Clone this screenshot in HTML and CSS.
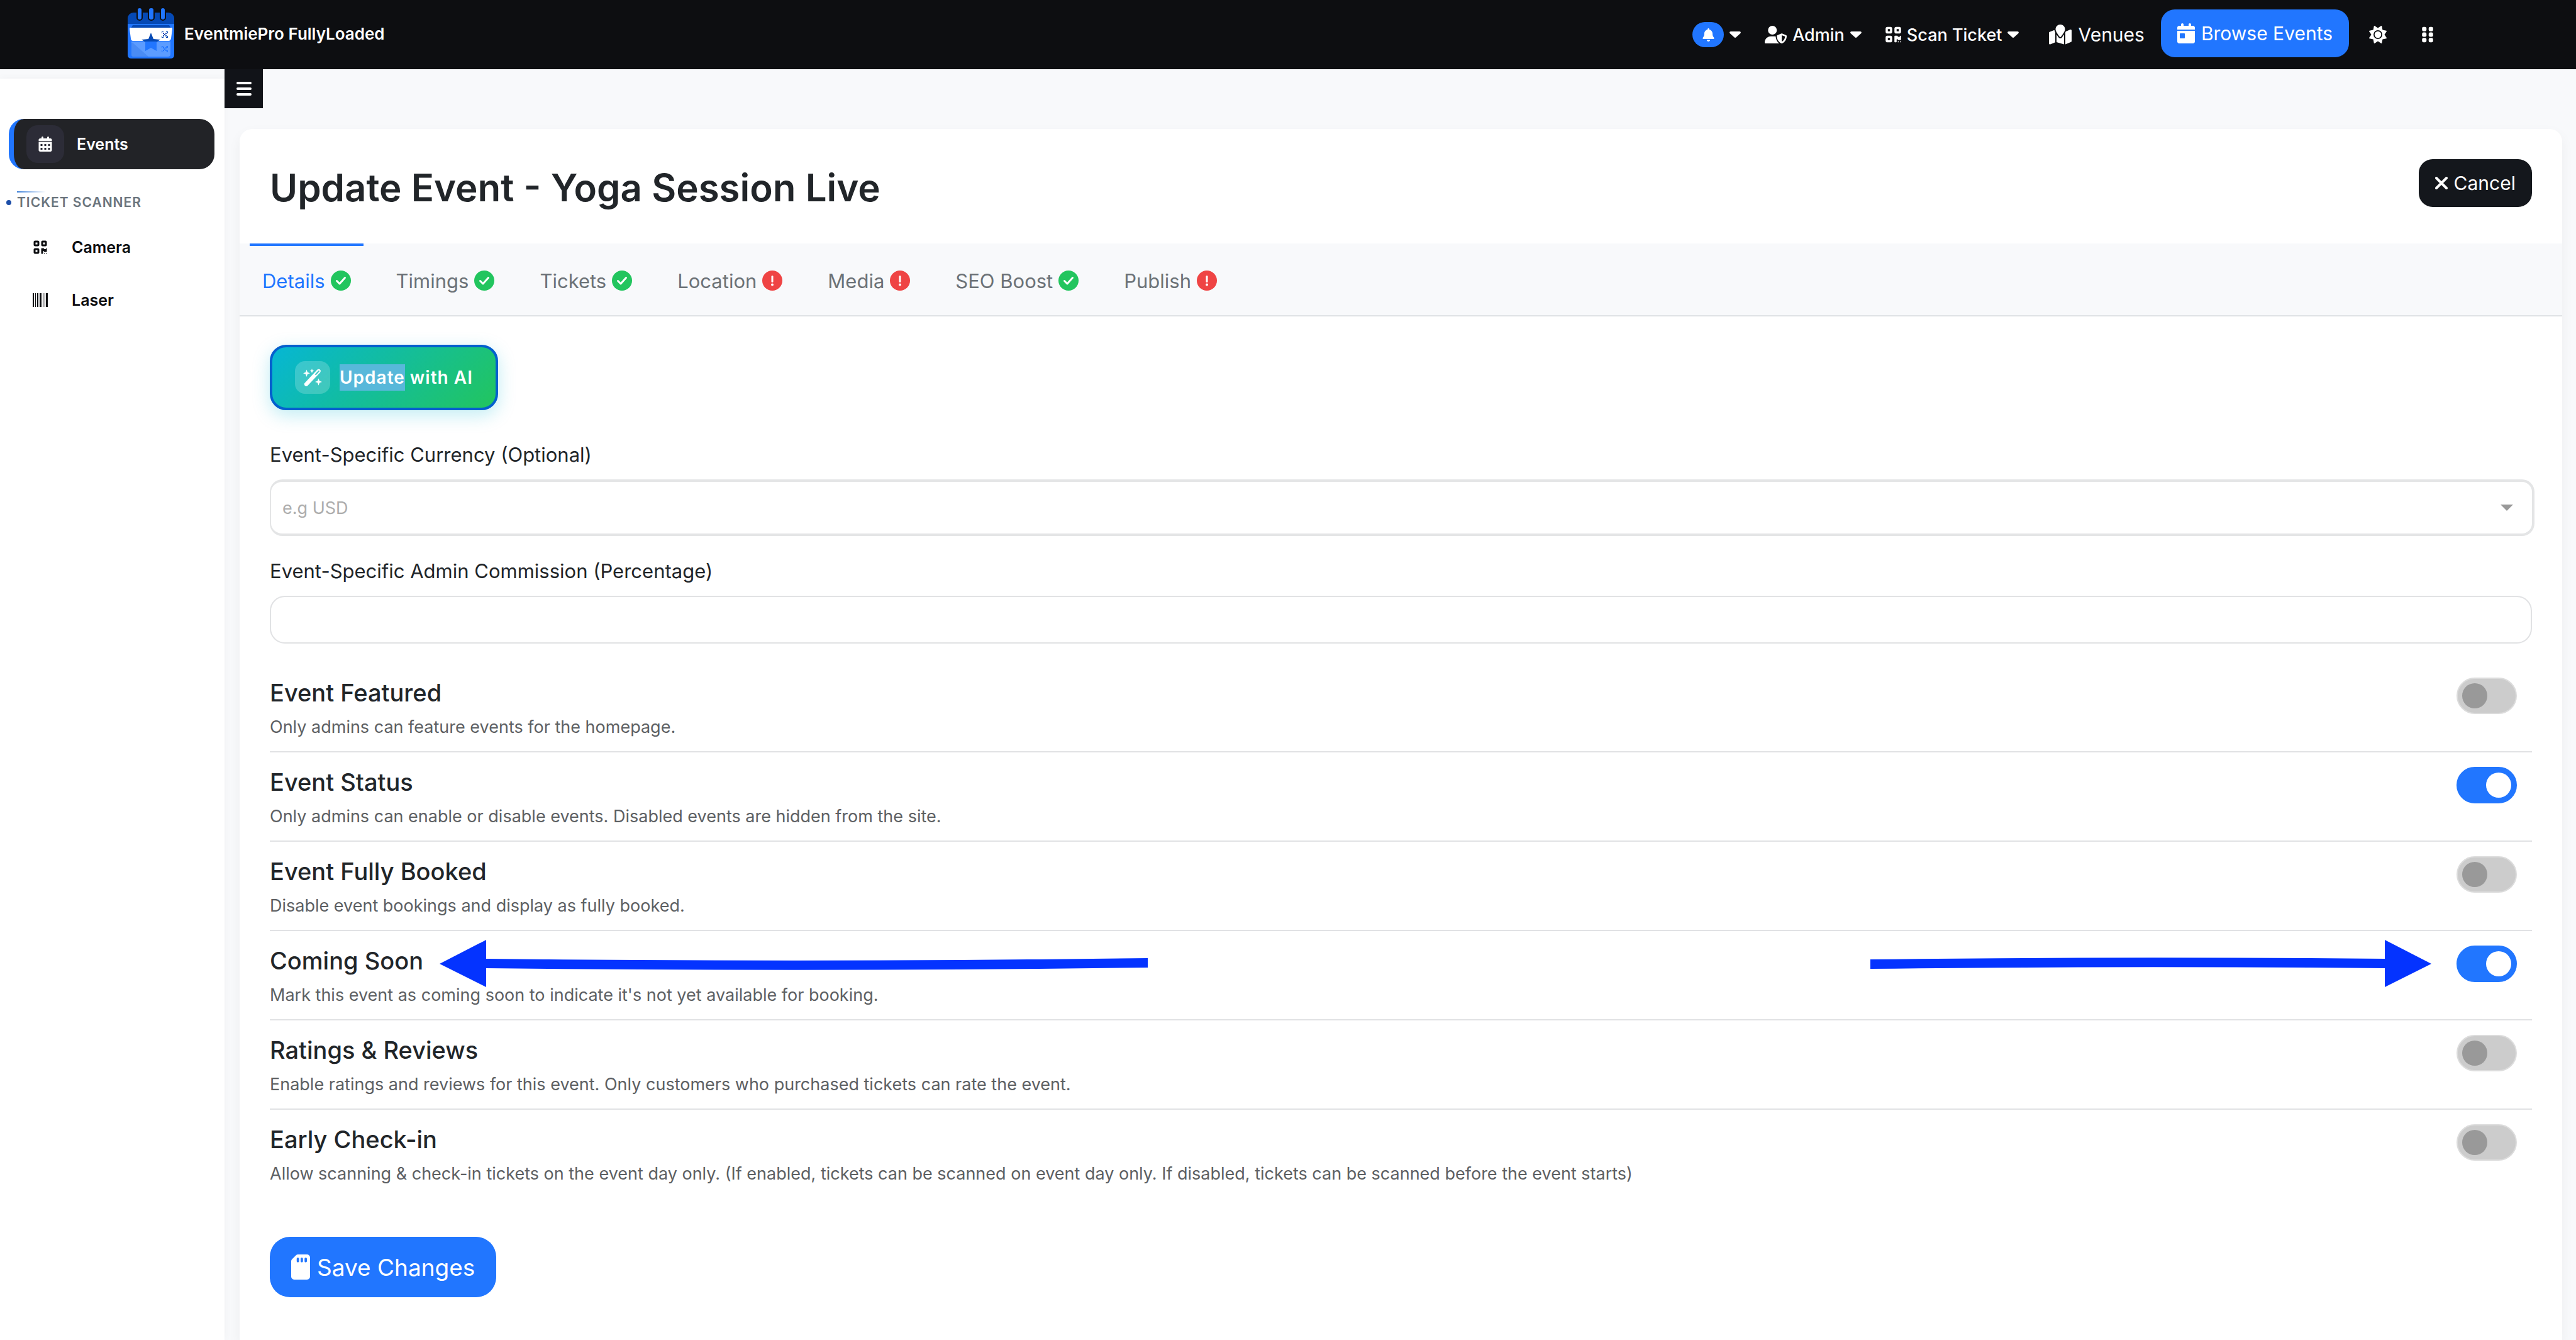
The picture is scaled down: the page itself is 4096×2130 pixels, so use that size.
FILE: index.html
```html
<!DOCTYPE html>
<html lang="en">
<head>
<meta charset="utf-8">
<title>Update Event - EventmiePro FullyLoaded</title>
<link rel="stylesheet" href="styles.css">
</head>
<body>
<svg class="sprite" aria-hidden="true">
  <symbol id="caret" viewBox="0 0 18 10"><path d="M2 0h14c1.700 0 2.500 1.800 1.300 3l-6.800 6.300c-.9.900-2.100.900-3 0L.7 3C-.5 1.800.3 0 2 0z"/></symbol>
  <symbol id="bell" viewBox="0 0 448 512"><path d="M224 0c-17.700 0-32 14.300-32 32V51.200C119 66 64 130.600 64 208v18.800c0 47-17.300 92.400-48.500 127.600l-7.400 8.300c-8.400 9.400-10.400 22.900-5.300 34.400S19.400 416 32 416H416c12.600 0 24-7.400 29.200-18.900s3.100-25-5.300-34.400l-7.400-8.300C401.300 319.200 384 273.900 384 226.800V208c0-77.400-55-142-128-156.800V32c0-17.700-14.300-32-32-32zm45.300 493.300c12-12 18.700-28.300 18.700-45.300H160c0 17 6.700 33.300 18.700 45.300s28.300 18.700 45.300 18.700s33.300-6.700 45.300-18.700z"/></symbol>
  <symbol id="user-shield" viewBox="0 0 640 512"><path d="M224 256A128 128 0 1 0 224 0a128 128 0 1 0 0 256zm-45.700 48C79.800 304 0 383.800 0 482.300C0 498.700 13.300 512 29.700 512H418.300c1.800 0 3.500-.2 5.300-.5c-76.300-55.100-99.800-141-103.100-200.200c-16.100-4.800-33.100-7.300-50.700-7.300H178.300zm308.800-78.300l-120 48C358 277.400 352 286.200 352 296c0 63.300 25.900 168.800 134.800 214.200c5.900 2.500 12.600 2.500 18.500 0C614.100 464.800 640 359.300 640 296c0-9.800-6-18.600-15.100-22.300l-120-48c-5.700-2.300-12.100-2.300-17.800 0zM591.400 312c-3.900 50.700-27.200 116.700-95.400 149.700V273.800L591.400 312z"/></symbol>
  <symbol id="qrcode" viewBox="0 0 448 512"><path fill-rule="evenodd" d="M0 80C0 53.500 21.500 32 48 32h96c26.500 0 48 21.500 48 48v96c0 26.500-21.500 48-48 48H48c-26.500 0-48-21.500-48-48V80zM64 96v64h64V96H64zM0 336c0-26.500 21.500-48 48-48h96c26.500 0 48 21.500 48 48v96c0 26.500-21.500 48-48 48H48c-26.500 0-48-21.500-48-48V336zm64 16v64h64V352H64zM304 32h96c26.500 0 48 21.500 48 48v96c0 26.500-21.500 48-48 48H304c-26.500 0-48-21.500-48-48V80c0-26.500 21.500-48 48-48zm80 64H320v64h64V96zM256 304c0-8.800 7.200-16 16-16h64c8.800 0 16 7.200 16 16s7.200 16 16 16h32c8.800 0 16-7.200 16-16s7.200-16 16-16s16 7.200 16 16v96c0 8.800-7.200 16-16 16H368c-8.800 0-16-7.200-16-16s-7.200-16-16-16s-16 7.200-16 16v64c0 8.800-7.200 16-16 16H272c-8.800 0-16-7.200-16-16V304zM368 480a16 16 0 1 1 0-32 16 16 0 1 1 0 32zm64 0a16 16 0 1 1 0-32 16 16 0 1 1 0 32z"/></symbol>
  <symbol id="map" viewBox="0 0 576 512"><path d="M408 120c0 54.600-73.100 151.900-105.200 192c-7.700 9.600-22 9.600-29.600 0C241.100 271.900 168 174.600 168 120C168 53.700 221.700 0 288 0s120 53.700 120 120zM416 503l144.900-58c9.100-3.600 15.100-12.500 15.100-22.300V152c0-17-17.100-28.600-32.900-22.300l-116 46.400c-.5 1.200-1 2.500-1.500 3.700c-2.900 6.800-6.100 13.700-9.600 20.600V503zM15.100 187.300C6 191 0 199.800 0 209.600V480.400c0 17 17.100 28.600 32.900 22.300L160 451.800V200.400c-3.500-6.900-6.700-13.800-9.600-20.600c-5.600-13.200-10.400-27.400-12.800-41.500l-122.500 49zM384 253c-20.500 31.300-42.300 59.600-56.200 77c-20.500 25.600-59.100 25.600-79.600 0c-13.900-17.400-35.700-45.700-56.200-77V449.400l192 54.900V253z"/></symbol>
  <symbol id="calendar-day" viewBox="0 0 448 512"><path fill-rule="evenodd" d="M128 0c17.700 0 32 14.300 32 32V64H288V32c0-17.700 14.300-32 32-32s32 14.300 32 32V64h48c26.500 0 48 21.500 48 48v48H0V112C0 85.500 21.500 64 48 64H96V32c0-17.700 14.300-32 32-32zM0 192H448V464c0 26.500-21.500 48-48 48H48c-26.500 0-48-21.500-48-48V192zm80 64c-8.800 0-16 7.200-16 16v96c0 8.800 7.200 16 16 16h96c8.800 0 16-7.200 16-16V272c0-8.800-7.200-16-16-16H80z"/></symbol>
  <symbol id="calendar-days" viewBox="0 0 448 512"><path fill-rule="evenodd" d="M128 0c17.700 0 32 14.300 32 32V64H288V32c0-17.700 14.300-32 32-32s32 14.300 32 32V64h48c26.500 0 48 21.500 48 48v48H0V112C0 85.500 21.500 64 48 64H96V32c0-17.700 14.300-32 32-32zM0 192H448V464c0 26.500-21.500 48-48 48H48c-26.500 0-48-21.500-48-48V192zM64 256v64h64v-64zM192 256v64h64v-64zM320 256v64h64v-64zM64 384v64h64v-64zM192 384v64h64v-64zM320 384v64h64v-64z"/></symbol>
  <symbol id="sun" viewBox="0 0 512 512"><path d="M361.500 1.200c5 2.100 8.600 6.600 9.600 11.900L391 121l107.900 19.800c5.300 1 9.800 4.600 11.900 9.600s1.500 10.700-1.600 15.200L446.900 256l62.300 90.300c3.100 4.500 3.700 10.200 1.600 15.200s-6.600 8.600-11.900 9.600L391 391 371.100 498.900c-1 5.300-4.600 9.800-9.600 11.900s-10.700 1.500-15.200-1.600L256 446.900l-90.300 62.300c-4.500 3.100-10.200 3.700-15.200 1.600s-8.600-6.600-9.600-11.900L121 391 13.100 371.100c-5.300-1-9.800-4.600-11.900-9.600s-1.500-10.700 1.600-15.200L65.100 256 2.800 165.700c-3.100-4.500-3.700-10.200-1.600-15.200s6.600-8.600 11.900-9.600L121 121 140.900 13.100c1-5.300 4.600-9.800 9.600-11.900s10.700-1.500 15.200 1.600L256 65.100 346.300 2.800c4.500-3.100 10.200-3.700 15.200-1.600zM160 256a96 96 0 1 1 192 0 96 96 0 1 1 -192 0zm224 0a128 128 0 1 0 -256 0 128 128 0 1 0 256 0z"/></symbol>
  <symbol id="grip" viewBox="0 0 320 512"><rect y="32" width="128" height="128" rx="42"/><rect x="192" y="32" width="128" height="128" rx="42"/><rect y="192" width="128" height="128" rx="42"/><rect x="192" y="192" width="128" height="128" rx="42"/><rect y="352" width="128" height="128" rx="42"/><rect x="192" y="352" width="128" height="128" rx="42"/></symbol>
  <symbol id="bars" viewBox="0 0 24 22"><rect width="24" height="4" rx="2"/><rect y="9" width="24" height="4" rx="2"/><rect y="18" width="24" height="4" rx="2"/></symbol>
  <symbol id="barcode" viewBox="0 0 24 22"><path d="M0 0h2v22H0zM4 0h1v22H4zM7 0h2v22H7zM11 0h3v22h-3zM16 0h1v22h-1zM19 0h1v22h-1zM21 0h3v22h-3z"/></symbol>
  <symbol id="xmark" viewBox="0 0 20 20"><path d="M2 2l16 16M18 2L2 18" fill="none" stroke="currentColor" stroke-width="4" stroke-linecap="round"/></symbol>
  <symbol id="ok" viewBox="0 0 32 32"><circle cx="16" cy="16" r="16" fill="#22c55e"/><path d="M9.500 16.500l4.500 4.500 8.500-9.500" fill="none" stroke="#fff" stroke-width="3" stroke-linecap="round" stroke-linejoin="round"/></symbol>
  <symbol id="alert" viewBox="0 0 32 32"><circle cx="16" cy="16" r="16" fill="#ef4444"/><path d="M16 9.500v8" stroke="#fff" stroke-width="3" stroke-linecap="round"/><circle cx="16" cy="22.500" r="2" fill="#fff"/></symbol>
  <symbol id="wand" viewBox="0 0 30 28"><path fill-rule="evenodd" d="M2.800 22.600 22.300 1.800c1.400-1.500 3.300-1.500 4.600-.2s1.300 3.200 0 4.600L7.200 26.900c-1.300 1.300-3.200 1.300-4.500 0s-1.300-3 .1-4.300zM24.200 3.300l-5.400 5.700 1.400 1.500 5.400-5.700c1-1.200-.4-2.600-1.400-1.500z"/><path d="M5.500 1.500 7 5.800l4 1.500-4 1.500-1.500 4.200L4 8.800 0 7.300l4-1.500zM14 0l1 2.500 2.500 1L15 4.500 14 7l-1-2.500-2.500-1 2.500-1zM24.500 15.500l1.500 4 4 1.500-4 1.500-1.500 4.200-1.500-4.200-4-1.500 4-1.500z"/></symbol>
  <symbol id="sd" viewBox="0 0 384 512"><path fill-rule="evenodd" d="M320 0H141.300C124.300 0 108 6.700 96 18.700L18.700 96C6.700 108 0 124.300 0 141.300V448c0 35.300 28.700 64 64 64H320c35.300 0 64-28.700 64-64V64c0-35.300-28.700-64-64-64zM160 88v48c0 13.300-10.700 24-24 24s-24-10.700-24-24V88c0-13.300 10.700-24 24-24s24 10.700 24 24zm80 0v48c0 13.300-10.700 24-24 24s-24-10.700-24-24V88c0-13.300 10.700-24 24-24s24 10.700 24 24zm80 0v48c0 13.300-10.700 24-24 24s-24-10.700-24-24V88c0-13.300 10.700-24 24-24s24 10.700 24 24z"/></symbol>
  <symbol id="mini-qr" viewBox="0 0 10 10"><path d="M0 0h3v1H1v2H0zM7 0h3v3H9V1H7zM0 7h1v2h2v1H0zM9 7h1v3H7V9h2zM2 2h2v2H2zM6 2h2v2H6zM4 4h2v2H4zM2 6h2v2H2zM6 6h2v2H6z"/></symbol>
</svg>

<header class="topbar">
  <a class="brand" href="#">
    <svg class="brand-logo" viewBox="0 0 74 80">
      <rect y="7" width="74" height="40" rx="9" fill="#0549b5"/>
      <path d="M0 25h74v49q0 6-6 6H6q-6 0-6-6z" fill="#2176ff"/>
      <path d="M8 27h58l3 5H5z" fill="#0549b5"/>
      <path d="M4 31h66q1 0 1 2l-2 15q-1 4-4 4H9q-4 0-4-4L3 33q0-2 1-2z" fill="#fff"/>
      <path d="M6 53h62v20q0 4-4 4H10q-4 0-4-4z" fill="#5c9cff"/>
      <path d="M8 55l25 22H10q-4 0-4-4V55z" fill="#4a8cf5"/>
      <path d="M37 39l4 10 11 1-6 4H28l-6-4 11-1z" fill="#0549b5"/>
      <path d="M28 53h18l0 15-9-5-9 5z" fill="#2176ff"/>
      <use href="#mini-qr" x="54" y="37" width="10" height="10" fill="#0549b5"/>
      <use href="#mini-qr" x="54" y="60" width="10" height="10" fill="#2176ff"/>
      <g fill="#2176ff" stroke="#0d0e11" stroke-width="2"><rect x="15" y="-1" width="8" height="20" rx="4"/><rect x="33" y="-1" width="9" height="20" rx="4"/><rect x="52" y="-1" width="8" height="20" rx="4"/></g>
    </svg>
    <span>EventmiePro FullyLoaded</span>
  </a>
  <nav class="topnav" aria-label="Main">
    <button class="nav-item" type="button" aria-label="Notifications"><span class="bell"><svg class="i-bell"><use href="#bell"/></svg></span><svg class="i-caret"><use href="#caret"/></svg></button>
    <button class="nav-item" type="button"><svg class="i-user"><use href="#user-shield"/></svg>Admin<svg class="i-caret"><use href="#caret"/></svg></button>
    <button class="nav-item" type="button"><svg class="i-qr"><use href="#qrcode"/></svg>Scan Ticket<svg class="i-caret"><use href="#caret"/></svg></button>
    <a class="nav-item large" href="#"><svg class="i-map"><use href="#map"/></svg>Venues</a>
    <a class="btn btn-blue" href="#"><svg class="i-cal"><use href="#calendar-day"/></svg>Browse Events</a>
    <button class="nav-icon" type="button" aria-label="Theme"><svg class="i-sun"><use href="#sun"/></svg></button>
    <button class="nav-icon" type="button" aria-label="More"><svg class="i-grip"><use href="#grip"/></svg></button>
  </nav>
</header>

<div class="layout">
  <aside class="sidebar">
    <a class="side-link active" href="#"><span class="side-icon"><svg class="i-side"><use href="#calendar-days"/></svg></span>Events</a>
    <h2 class="side-heading"><span>Ticket Scanner</span></h2>
    <a class="side-link" href="#"><span class="side-icon"><svg class="i-side"><use href="#qrcode"/></svg></span>Camera</a>
    <a class="side-link" href="#"><span class="side-icon"><svg class="i-side"><use href="#barcode"/></svg></span>Laser</a>
  </aside>

  <main class="main">
    <button class="menu-toggle" type="button" aria-label="Toggle menu"><svg class="i-bars"><use href="#bars"/></svg></button>
    <section class="card">
      <div class="card-head">
        <h1>Update Event - Yoga Session Live</h1>
        <a class="btn btn-dark" href="#"><svg class="i-x"><use href="#xmark"/></svg>Cancel</a>
      </div>
      <nav class="tabs" aria-label="Event steps">
        <a class="tab active" href="#">Details<svg class="i-state"><use href="#ok"/></svg></a>
        <a class="tab" href="#">Timings<svg class="i-state"><use href="#ok"/></svg></a>
        <a class="tab" href="#">Tickets<svg class="i-state"><use href="#ok"/></svg></a>
        <a class="tab" href="#">Location<svg class="i-state"><use href="#alert"/></svg></a>
        <a class="tab" href="#">Media<svg class="i-state"><use href="#alert"/></svg></a>
        <a class="tab" href="#">SEO Boost<svg class="i-state"><use href="#ok"/></svg></a>
        <a class="tab" href="#">Publish<svg class="i-state"><use href="#alert"/></svg></a>
      </nav>
      <form class="form">
        <button class="ai-button" type="button"><span class="ai-icon"><svg class="i-wand"><use href="#wand"/></svg></span><span><mark>Update</mark> with AI</span></button>

        <label class="label" for="currency">Event-Specific Currency (Optional)</label>
        <div class="select-wrap">
          <select id="currency"><option>e.g USD</option></select>
          <svg class="select-caret" viewBox="0 0 20 10"><path d="M0 0h20L10 10z"/></svg>
        </div>

        <label class="label" for="commission">Event-Specific Admin Commission (Percentage)</label>
        <input class="text-input" id="commission" type="text">

        <div class="options">
          <div class="option">
            <div><label for="featured">Event Featured</label><p>Only admins can feature events for the homepage.</p></div>
            <input class="switch" id="featured" type="checkbox">
          </div>
          <div class="option">
            <div><label for="status">Event Status</label><p>Only admins can enable or disable events. Disabled events are hidden from the site.</p></div>
            <input class="switch" id="status" type="checkbox" checked>
          </div>
          <div class="option">
            <div><label for="booked">Event Fully Booked</label><p>Disable event bookings and display as fully booked.</p></div>
            <input class="switch" id="booked" type="checkbox">
          </div>
          <div class="option">
            <div><label for="soon">Coming Soon</label><p>Mark this event as coming soon to indicate it's not yet available for booking.</p></div>
            <svg class="arrow arrow-left" viewBox="0 0 1126 76"><path d="M0 38 74 0V30Q600 36 1126 29V44Q600 51 74 45V75z"/></svg>
            <svg class="arrow arrow-right" viewBox="0 0 892 76"><path d="M892 38 818 0V30Q400 26 0 31V46Q400 41 818 45V75z"/></svg>
            <input class="switch" id="soon" type="checkbox" checked>
          </div>
          <div class="option">
            <div><label for="ratings">Ratings &amp; Reviews</label><p>Enable ratings and reviews for this event. Only customers who purchased tickets can rate the event.</p></div>
            <input class="switch" id="ratings" type="checkbox">
          </div>
          <div class="option">
            <div><label for="checkin">Early Check-in</label><p>Allow scanning &amp; check-in tickets on the event day only. (If enabled, tickets can be scanned on event day only. If disabled, tickets can be scanned before the event starts)</p></div>
            <input class="switch" id="checkin" type="checkbox">
          </div>
        </div>

        <button class="save" type="button"><svg class="i-sd"><use href="#sd"/></svg>Save Changes</button>
      </form>
    </section>
  </main>
</div>
</body>
</html>
```
FILE: styles.css
```css
*, *::before, *::after { box-sizing: border-box; }

:root {
  --blue: #2176ff;
  --ink: #212529;
  --line: #e1e2e4;
}

body {
  margin: 0;
  min-height: 100vh;
  display: flex;
  flex-direction: column;
  background: #f8f9fb;
  color: var(--ink);
  font-family: Inter, "Liberation Sans", sans-serif;
  font-size: 31px;
}

a { color: inherit; text-decoration: none; }
button { font: inherit; border: 0; padding: 0; background: none; color: inherit; cursor: pointer; }
svg { display: block; fill: currentColor; flex: none; }
h1, h2, p { margin: 0; }
.sprite { position: absolute; width: 0; height: 0; }

/* icon sizes */
.i-caret { width: 18px; height: 10px; }
.i-bell { width: 19px; height: 21px; }
.i-user { width: 35px; height: 28px; }
.i-qr { width: 25px; height: 28px; }
.i-map { width: 36px; height: 32px; }
.i-cal { width: 28px; height: 32px; }
.i-sun { width: 28px; height: 28px; }
.i-grip { width: 18px; height: 28px; }
.i-bars { width: 24px; height: 22px; }
.i-side { width: 24px; height: 24px; }
.i-x { width: 20px; height: 20px; }
.i-state { width: 32px; height: 32px; }
.i-wand { width: 30px; height: 28px; }
.i-sd { width: 30px; height: 40px; }

/* top bar */
.topbar {
  display: flex;
  align-items: center;
  justify-content: space-between;
  height: 110px;
  padding: 0 227px 0 203px;
  background: #0d0e11;
  color: #fff;
}
.brand {
  display: flex;
  align-items: center;
  gap: 16px;
  padding-bottom: 4px;
  font-size: 26px;
  font-weight: 600;
}
.brand-logo { width: 74px; height: 80px; overflow: visible; }
.topnav { display: flex; align-items: center; gap: 38px; }
.nav-item { display: flex; align-items: center; gap: 9px; font-size: 27px; font-weight: 500; }
.nav-item.large { margin: 0 -12px 0 10px; gap: 10px; font-size: 30px; font-weight: 400; }
.bell {
  display: flex;
  align-items: center;
  justify-content: center;
  width: 50px;
  height: 40px;
  border-radius: 20px;
  background: var(--blue);
}
.nav-icon + .nav-icon { margin-left: 18px; }
.btn {
  display: flex;
  align-items: center;
  gap: 10px;
  height: 76px;
  padding: 0 26px;
  border-radius: 22px;
  color: #fff;
  font-size: 30px;
}
.topnav .btn { margin-right: -6px; margin-bottom: 4px; }
.btn-blue { background: var(--blue); }
.btn-dark { background: #14171c; }

/* side bar */
.layout { display: flex; flex: 1; }
.sidebar {
  width: 357px;
  flex: none;
  margin-top: 15px;
  padding: 64px 16px 0 14px;
  background: #fff;
  box-shadow: 0 0 12px rgba(0, 0, 0, .04);
}
.side-link {
  display: flex;
  align-items: center;
  gap: 20px;
  height: 80px;
  margin-bottom: 4px;
  padding-left: 20px;
  border-radius: 24px;
  color: #0d0e11;
  font-size: 25px;
  font-weight: 600;
}
.side-link.active {
  margin-bottom: 0;
  border-left: 8px solid var(--blue);
  background: #222327;
  color: #fff;
}
.side-icon {
  display: flex;
  align-items: center;
  justify-content: center;
  width: 60px;
  height: 60px;
  border-radius: 18px;
}
.active .side-icon { background: #2c2c37; }
.side-heading {
  display: flex;
  align-items: center;
  gap: 9px;
  height: 84px;
  margin-left: -4px;
  padding-top: 22px;
  color: #6c757d;
  font-size: 21px;
  font-weight: 600;
  line-height: 36px;
  letter-spacing: 1px;
  text-transform: uppercase;
}
.side-heading::before { content: ""; width: 8px; height: 8px; border-radius: 4px; background: #1d4ea8; }
.side-heading span { background: linear-gradient(90deg, #3c7fd8, #fff) no-repeat 0 0 / 46px 2px; }

/* main card */
.main { flex: 1; min-width: 0; display: flex; flex-direction: column; align-items: stretch; }
.menu-toggle {
  display: flex;
  align-items: center;
  justify-content: center;
  width: 61px;
  height: 62px;
  background: #111318;
  color: #fff;
}
.card {
  flex: 1;
  margin: 33px 22px 0 24px;
  border-radius: 20px 20px 0 0;
  background: #fff;
  box-shadow: 0 8px 20px rgba(0, 0, 0, .05);
}
.card-head {
  display: flex;
  align-items: flex-start;
  justify-content: space-between;
  height: 182px;
  padding: 48px 48px 0;
}
h1 { font-size: 60px; font-weight: 600; line-height: 90px; }
.tabs {
  display: flex;
  gap: 32px;
  height: 116px;
  padding-left: 16px;
  border-bottom: 2px solid #dfe2e5;
  background: #f8f9fb;
}
.tab {
  display: flex;
  align-items: center;
  gap: 9px;
  padding: 0 20px;
  border-top: 4px solid transparent;
  color: #6c7277;
}
.tab.active { border-color: var(--blue); color: var(--blue); }

/* form */
.form { display: flex; flex-direction: column; align-items: stretch; padding: 45px 48px 60px; }
.ai-button {
  align-self: flex-start;
  display: flex;
  align-items: center;
  gap: 15px;
  height: 104px;
  padding: 0 36px;
  border: 4px solid #0460ce;
  border-radius: 26px;
  background: linear-gradient(135deg, #06b6d4, #22c55e);
  box-shadow: 0 8px 28px rgba(6, 182, 212, .25);
  color: #fff;
  font-size: 28px;
  font-weight: 600;
  line-height: 42px;
  letter-spacing: 1px;
}
.ai-button mark { display: inline-block; background: #58b8da; color: inherit; }
.ai-icon {
  display: flex;
  align-items: center;
  justify-content: center;
  width: 56px;
  height: 52px;
  border-radius: 16px;
  background: rgba(255, 255, 255, .2);
}
.label { margin: 51px 0 19px; line-height: 40px; }
.select-wrap { display: grid; align-items: center; margin-right: -4px; }
.select-wrap > * { grid-area: 1 / 1; }
.select-caret { justify-self: end; width: 20px; height: 10px; margin-right: 34px; fill: #999; pointer-events: none; }
select {
  appearance: none;
  width: 100%;
  height: 90px;
  padding: 0 18px;
  border: 4px solid #e4e5e6;
  border-left-width: 2px;
  border-radius: 20px;
  background: #fff;
  color: #adadad;
  font: inherit;
  font-size: 27px;
}
.select-wrap + .label { margin-top: 36px; }
.text-input {
  width: 100%;
  height: 76px;
  padding: 0 24px;
  border: 2px solid var(--line);
  border-radius: 24px;
  background: #fff;
  font: inherit;
}
.options { margin-top: 31px; }
.option {
  position: relative;
  display: flex;
  align-items: flex-start;
  justify-content: space-between;
  height: 142px;
  padding: 23px 24px 0 0;
  border-bottom: 2px solid var(--line);
}
.option:last-child { border-bottom-color: transparent; }
.option label { display: block; font-size: 38px; font-weight: 500; line-height: 48px; }
.option p { margin-top: 13px; color: #5d6063; font-size: 27px; line-height: 36px; }
.switch {
  appearance: none;
  position: relative;
  width: 96px;
  height: 58px;
  margin: 0;
  border: 2px solid #dcdcdc;
  border-radius: 29px;
  background: #ccc;
  cursor: pointer;
}
.switch::before {
  content: "";
  position: absolute;
  top: 7px;
  left: 7px;
  width: 40px;
  height: 40px;
  border-radius: 50%;
  background: #999;
}
.switch:checked { border-color: var(--blue); background: var(--blue); }
.switch:checked::before { left: auto; right: 7px; background: #fff; }
.arrow { position: absolute; top: 14px; height: 76px; fill: #0433ff; }
.arrow-left { left: 270px; width: 1126px; }
.arrow-right { right: 160px; width: 892px; }
.save {
  align-self: flex-start;
  display: flex;
  align-items: center;
  gap: 11px;
  height: 96px;
  margin-top: 60px;
  padding: 0 34px;
  border-radius: 32px;
  background: var(--blue);
  color: #fff;
  font-size: 37px;
}
```
